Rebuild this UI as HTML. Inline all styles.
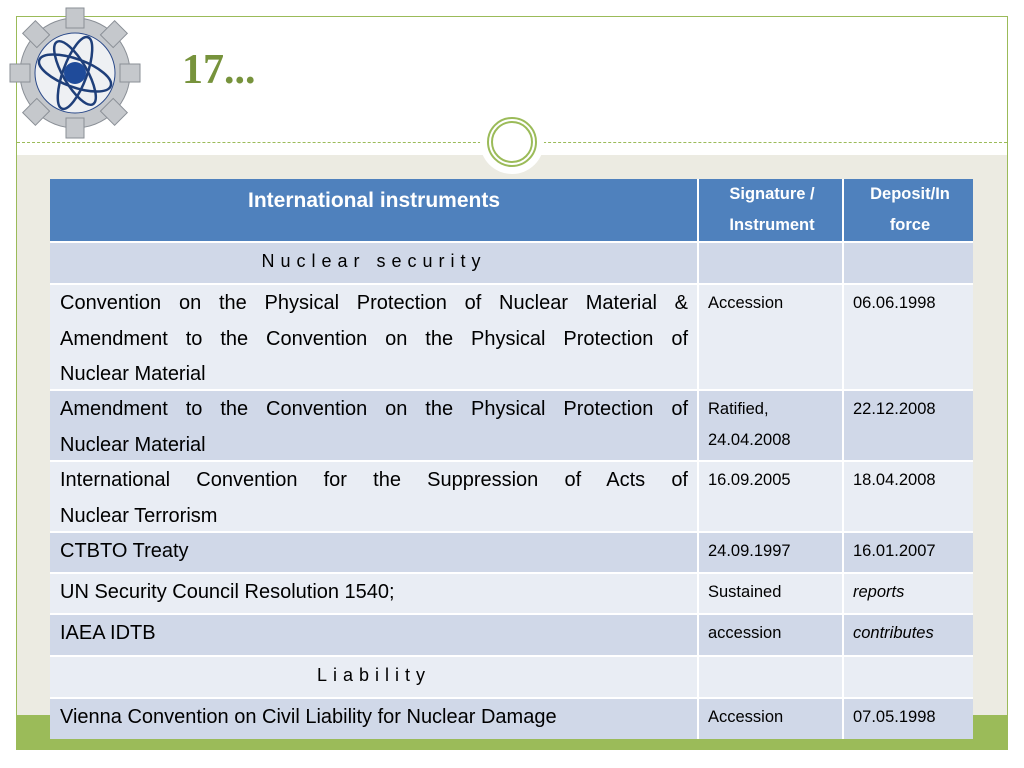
<!DOCTYPE html>
<html><head><meta charset="utf-8"><style>
*{margin:0;padding:0;box-sizing:border-box}
body{width:1024px;height:768px;background:#fff;position:relative;overflow:hidden;font-family:"Liberation Sans",sans-serif}
.frame{position:absolute;left:16px;top:16px;width:992px;height:734px;border:1px solid #9bbb59;border-bottom:none}
.beige{position:absolute;left:17px;top:155px;width:990px;height:560px;background:#ecebe2}
.green{position:absolute;left:17px;top:715px;width:990px;height:35px;background:#9bbb59}
.dash{position:absolute;left:17px;top:142px;width:990px;border-top:1px dashed #9bbb59}
.disk{position:absolute;left:480px;top:110px;width:64px;height:64px;border-radius:50%;background:#fff}
.ring{position:absolute;left:487px;top:117px;width:50px;height:50px;border-radius:50%;border:2px solid #9bbb59}
.ring2{position:absolute;left:491px;top:121px;width:42px;height:42px;border-radius:50%;border:2px solid #9bbb59}
h1{position:absolute;left:182px;top:46px;font-family:"Liberation Serif",serif;font-weight:bold;font-size:42px;color:#77933c}
.t{position:absolute;left:50px;top:179px;width:923px;height:560px}
.r{position:absolute;left:0;width:923px}
.r>div{position:absolute;top:0;bottom:0;overflow:hidden;color:#000}
.a{left:0;width:647px;font-size:20px;line-height:35.5px;padding:1px 9px 0 10px}
.b{left:647px;width:145px;font-size:16.5px;line-height:31px;padding:3px 6px 0 9px;border-left:2px solid #fff}
.c{left:792px;width:131px;font-size:16.5px;line-height:31px;padding:3px 6px 0 9px;border-left:2px solid #fff}
.r{border-top:2px solid #fff}
.d>div{background:#d0d8e8}.l>div{background:#e9edf4}
.h>div{background:#4f81bd;color:#fff;font-weight:bold;text-align:center}
.h .a{font-size:21px;padding-top:4px}
.h .b,.h .c{padding-top:0;font-size:16.5px}
.j{text-align:justify;text-align-last:justify}
.sp{text-align:center;letter-spacing:6px;font-size:18px!important}
</style></head><body>
<div class="frame"></div>
<div class="beige"></div><div class="green"></div>
<div class="dash"></div>
<div class="disk"></div><div class="ring"></div><div class="ring2"></div>
<svg style="position:absolute;left:8px;top:6px" width="134" height="134" viewBox="0 0 134 134">
<g fill="#c5c8cc" stroke="#8a8f96" stroke-width="1">
<circle cx="67" cy="67" r="55"/>
<g><rect x="58" y="2" width="18" height="20"/><rect x="58" y="112" width="18" height="20"/><rect x="2" y="58" width="20" height="18"/><rect x="112" y="58" width="20" height="18"/>
<rect x="58" y="2" width="18" height="20" transform="rotate(45 67 67)"/><rect x="58" y="112" width="18" height="20" transform="rotate(45 67 67)"/><rect x="2" y="58" width="20" height="18" transform="rotate(45 67 67)"/><rect x="112" y="58" width="20" height="18" transform="rotate(45 67 67)"/></g>
</g>
<circle cx="67" cy="67" r="40" fill="#eef0f3" stroke="#2b4a8a" stroke-width="1"/>
<g fill="none" stroke="#1f3f7a" stroke-width="2.5">
<ellipse cx="67" cy="67" rx="38" ry="14" transform="rotate(20 67 67)"/>
<ellipse cx="67" cy="67" rx="38" ry="12" transform="rotate(-70 67 67)"/>
<ellipse cx="67" cy="67" rx="36" ry="12" transform="rotate(60 67 67)"/>
</g>
<circle cx="67" cy="67" r="11" fill="#1f4b9a"/>
</svg>
<h1>17...</h1>
<div class="t">
<div class="r h" style="top:0;height:62px;border-top:none"><div class="a">International instruments</div><div class="b">Signature /<br>Instrument</div><div class="c">Deposit/In<br>force</div></div>
<div class="r d" style="top:62px;height:42px"><div class="a sp">Nuclear security</div><div class="b"></div><div class="c"></div></div>
<div class="r l" style="top:104px;height:106px"><div class="a"><div class="j">Convention on the Physical Protection of Nuclear Material &amp;</div><div class="j">Amendment to the Convention on the Physical Protection of</div><div>Nuclear Material</div></div><div class="b">Accession</div><div class="c">06.06.1998</div></div>
<div class="r d" style="top:210px;height:71px"><div class="a"><div class="j">Amendment to the Convention on the Physical Protection of</div><div>Nuclear Material</div></div><div class="b">Ratified,<br>24.04.2008</div><div class="c">22.12.2008</div></div>
<div class="r l" style="top:281px;height:71px"><div class="a"><div class="j">International Convention for the Suppression of Acts of</div><div>Nuclear Terrorism</div></div><div class="b">16.09.2005</div><div class="c">18.04.2008</div></div>
<div class="r d" style="top:352px;height:41px"><div class="a">CTBTO Treaty</div><div class="b">24.09.1997</div><div class="c">16.01.2007</div></div>
<div class="r l" style="top:393px;height:41px"><div class="a">UN Security Council Resolution 1540;</div><div class="b">Sustained</div><div class="c"><i>reports</i></div></div>
<div class="r d" style="top:434px;height:42px"><div class="a">IAEA IDTB</div><div class="b">accession</div><div class="c"><i>contributes</i></div></div>
<div class="r l" style="top:476px;height:42px"><div class="a sp">Liability</div><div class="b"></div><div class="c"></div></div>
<div class="r d" style="top:518px;height:42px"><div class="a">Vienna Convention on Civil Liability for Nuclear Damage</div><div class="b">Accession</div><div class="c">07.05.1998</div></div>
</div>
</body></html>
